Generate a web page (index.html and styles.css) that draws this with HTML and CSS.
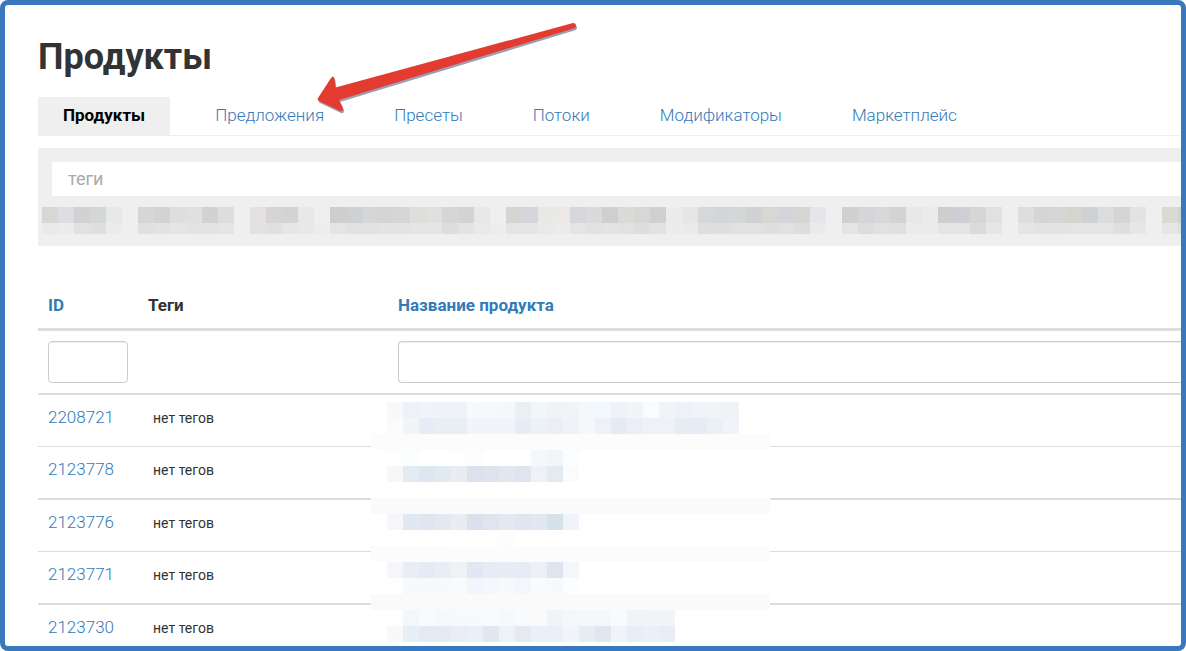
FILE: index.html
```
<!DOCTYPE html>
<html lang="ru">
<head>
    <meta charset="UTF-8">
    <meta name="viewport" content="width=device-width, initial-scale=1.0">
    <title>Продукты</title>
    <link rel="stylesheet" href="styles.css">
</head>

<body>
    <div class="page">
        <h1>Продукты</h1>

        <nav class="tabs">
            <a href="#" class="tab active">Продукты</a>
            <a href="#" class="tab">Предложения</a>
            <a href="#" class="tab">Пресеты</a>
            <a href="#" class="tab">Потоки</a>
            <a href="#" class="tab">Модификаторы</a>
            <a href="#" class="tab">Маркетплейс</a>
        </nav>

        <div class="filter">
            <input type="text" class="tags-input" placeholder="теги" aria-label="теги">
            <svg id="tag-list" class="tag-list" width="1152" height="27"></svg>
        </div>

        <div class="table-wrap">
            <table class="table">
                <thead>
                    <tr>
                        <th class="col-id"><a href="#">ID</a></th>
                        <th class="col-tags">Теги</th>
                        <th><a href="#">Название продукта</a></th>
                    </tr>
                    <tr class="search-row">
                        <td><input type="text" class="form-control" aria-label="ID"></td>
                        <td></td>
                        <td class="name-cell"><input type="text" class="form-control name-input" aria-label="Название продукта"></td>
                    </tr>
                </thead>
                <tbody>
                    <tr><td><a href="#">2208721</a></td><td class="tags">нет тегов</td><td></td></tr>
                    <tr><td><a href="#">2123778</a></td><td class="tags">нет тегов</td><td></td></tr>
                    <tr><td><a href="#">2123776</a></td><td class="tags">нет тегов</td><td></td></tr>
                    <tr><td><a href="#">2123771</a></td><td class="tags">нет тегов</td><td></td></tr>
                    <tr><td><a href="#">2123730</a></td><td class="tags">нет тегов</td><td></td></tr>
                </tbody>
            </table>
            <svg id="names" class="names" width="399" height="240"></svg>
        </div>

        <!-- pointer to the second tab -->
        <svg class="arrow" width="270" height="100" viewBox="0 0 270 100">
            <path class="arrow-shadow" d="M3 79 L16 59 Q19 56 19.500 60 L20.500 68.500 L258 4 Q261 4 261 7 L260 9 L24 81 L28 89 Q28 93 25 92 L4 82 Q2 81 3 79Z"/>
            <path class="arrow-body" d="M3 79 L16 59 Q19 56 19.500 60 L20.500 68.500 L258 4 Q261 4 261 7 L260 9 L24 81 L28 89 Q28 93 25 92 L4 82 Q2 81 3 79Z"/>
        </svg>
    </div>

    <script src="script.js"></script>
</body>
</html>
```
FILE: styles.css
```
* {
    box-sizing: border-box;
}

body {
    margin: 0;
    font-family: Roboto, "Open Sans", sans-serif;
    font-size: 17px;
    font-weight: 300;
    line-height: 24px;
    color: #333;
    background-color: #fff;
}

a {
    color: #337ab7;
    text-decoration: none;
}

.page {
    position: relative;
    height: 100vh;
    padding: 32px 0 0 33px;
    border: 5px solid #3879bd;
    border-radius: 8px;
    overflow: hidden;
}

h1 {
    margin: 0 0 20px;
    font-size: 36px;
    font-weight: 700;
    line-height: 40px;
}

.tabs {
    display: flex;
    gap: 20px;
    border-bottom: 1px solid #eee;
}

.tab {
    padding: 6px 25px 8px;
}

.tab.active {
    background-color: #efefef;
    color: #000;
    font-weight: 700;
}

.filter {
    margin-top: 12px;
    padding: 14px 0 12px;
    background-color: #efefef;
    overflow: hidden;
}

.tags-input {
    display: block;
    width: 100%;
    height: 34px;
    margin: 0 0 11px 14px;
    padding: 0 16px 2px;
    border: 0;
    background-color: #fff;
    font-family: Roboto, sans-serif;
    font-size: 18px;
}

.tags-input::placeholder {
    color: #aaa;
}

.tag-list {
    display: block;
    margin-left: 4px;
}

.table-wrap {
    position: relative;
    margin-top: 42px;
}

.table {
    width: 100%;
    table-layout: fixed;
    border-collapse: separate;
    border-spacing: 0;
}

.col-id {
    width: 100px;
}

.col-tags {
    width: 250px;
}

th {
    padding: 5px 10px 11px;
    border-bottom: 3px solid #ddd;
    font-weight: 700;
    text-align: left;
}

td {
    height: 52px;
    padding: 0 10px 8px;
    border-top: 1px solid #ddd;
}

tbody tr:nth-child(odd) td {
    height: 53px;
    border-top-width: 2px;
}

.search-row td {
    height: 62px;
    padding: 0 10px;
    border-top: 0;
}

.search-row .name-cell {
    padding-right: 0;
}

.form-control {
    display: block;
    width: 100%;
    height: 42px;
    padding: 6px 12px;
    border: 1px solid #ccc;
    border-radius: 4px;
    background-color: #fff;
    box-shadow: inset 0 1px 1px rgba(0, 0, 0, 0.075);
    font-size: 17px;
}

.name-input {
    border-right: 0;
    border-radius: 4px 0 0 4px;
}

tbody .tags {
    padding: 0 10px 6px 15px;
    font-size: 14px;
    font-weight: 400;
}

/* blurred product names lie over the rows */
.names {
    position: absolute;
    left: 333px;
    top: 114px;
}

.arrow {
    position: absolute;
    left: 310px;
    top: 14px;
}

.arrow-body {
    fill: #e43b30;
}

.arrow-shadow {
    fill: #9a9fb5;
    transform: translate(1px, 2px);
}
```
FILE: script.js
```
const CELL = 16;

// Draws one row of square cells, "-" leaves a cell empty
function drawRow(svg, x, y, height, colors) {
    colors.split(" ").forEach((color, i) => {
        if (color !== "-") {
            addRect(svg, x + i * CELL, y, CELL, height, "#" + color);
        }
    });
}

function addRect(svg, x, y, width, height, fill) {
    const rect = document.createElementNS("http://www.w3.org/2000/svg", "rect");
    rect.setAttribute("x", x);
    rect.setAttribute("y", y);
    rect.setAttribute("width", width);
    rect.setAttribute("height", height);
    rect.setAttribute("fill", fill);
    rect.setAttribute("shape-rendering", "crispEdges");
    svg.appendChild(rect);
}

// Tags
const tagList = document.getElementById("tag-list");
drawRow(tagList, 0, 0, 16, "d9d7d4 dddee1 d2d2d2 d5d7d6 e7e9e8 - d6d6d6 d2d4d3 dededc e0e0e2 d2d2d2 dddddb - e3e2e0 d7d4d8 d3d3d3 e8e8e8 - d0cdce cfd0d3 d5d7d6 d5d5d5 d5d7d6 dededc e0e0de d6d6d6 d3d3d3 e6e9e8 - d5d5d3 d5d5db e8e8e6 ece8e5 d6d7da dadada cfcfcf dbdad7 d7d7d7 d2cfd1 ebedec e6e6e6 d5d7da d3d5d9 d5d7d6 cfd1d4 d8d7d4 d5d5d9 d6d7d4 e5e6e9 - d0d0d0 d5d6d9 d8d8d8 d3d3d3 e8e8e8 ebebe9 cecece cfced5 d6d6d6 e1e1e1 - dfdedd d5d5d5 d5d7d6 d4d5cf cfd1d5 dbdcde d4d4d4 e3e3e3 - d9dad4 d3d4d1");
drawRow(tagList, 0, 16, 11, "e9e9e7 eaecec e1e1df dee0df ebebeb - e0e0e0 e1e3e2 e5e5e5 e3e3e3 e3e3e3 e5e5e5 - e3e2e0 dfe0e3 e6e6e6 e8e8e8 ededed e4e4e4 e1e1e1 e1e1e1 e3e3e3 e3e3e3 e5e5e3 e5e5e3 dddddd e3e3e1 e9e9e9 ededed e4e4e4 e4e4e4 e9e9e9 ebebe9 e4e4e4 e1e1e1 e3e3e3 e1e1e1 dfdce0 e2e2e2 ebedec eaeaea dcdfde dee0df e1e1e1 e1e1e1 dfdfdf e1e1e1 dcdedd e9eaec - e4e4e4 dcdcda e1e1e1 dfe0e2 ebebeb ebebe9 e4e4e4 e3e5e4 dbdbd9 e5e7e6 - e5e5e5 e3e3e3 e3e3e3 e4e4e2 e4e6e5 e3e5e4 dfdfdf e7e7e7 - e6e6e4 dededc");

// Product names
const names = document.getElementById("names");
[[32, "fcfcfc"], [96, "fafafa"], [144, "fcfcfc"], [192, "fafafa"]].forEach(band => {
    addRect(names, 0, band[0], 399, 16, "#" + band[1]);
});
drawRow(names, 16, 0, 16, "f8f9fb eef1f7 f0f4f9 eff2f7 eff2f7 f7f9fa f6f8f9 f3f8fb e9eff3 f1f6f9 eff3f8 f0f4f7 f3f8fc f3f8fc eff3f8 f1f5f8 f9fbfc f0f4f9 eef1f6 f0f4f8 f0f4f7 eff3f8");
drawRow(names, 16, 16, 16, "fbfbfd f1f5f8 e4ecf5 e9eef2 e9edf5 f1f5fa f1f5fa f1f5fa e5edf6 edf0f5 eceef6 eff3f9 f5f7fb eef2f6 e4ebf5 ebeef7 eef2f7 eef1f6 e7ebf3 e4ecf5 eceff4 f0f4f9");
drawRow(names, 16, 48, 16, "fdfefe fbfdff - - fefefe fbfdff - - - f4f8fb f1f6f8 fcfdff");
drawRow(names, 16, 64, 16, "f5f7f9 e2eaf3 dee6ef e1e9f1 e9edf1 dae2ed dde4ee e1e8f0 dde5ef eef2f7 e2eaf2 f9fbfd");
drawRow(names, 16, 112, 16, "f4f6fa e0e8f2 dfe6f0 e1e9f1 e9ecf1 dae1ee dfe5ef e2e9f1 dfe6f0 e1e8f1 d7e1eb f0f4fa");
drawRow(names, 16, 128, 16, "- - - - fefefe fefefe fefefe fdfdfd");
drawRow(names, 16, 160, 16, "f4f6fa e8edf6 e4ebf4 e8edf6 eef2f5 e1e8f3 e4ecf4 e7ecf5 e5ecf5 edf0f5 dde5ee f3f7fa");
drawRow(names, 16, 176, 16, "fefefe f8f9fc f8f9fc f8f9fc f8fafc f2f5fb f5f7fb f8f9fb f3f7fb f9fafc f8f9fb fcfdff");
drawRow(names, 16, 208, 16, "fefefe f3f7fa f8fafc f7f8fb f8f9fb f6fafd f9fafc f5f9fc f9fafb fafafa f0f4f9 f4f6fa f5f7fb f4f8fb f9fafc f0f3f8 f0f5f8 f1f5f9");
drawRow(names, 16, 224, 16, "f8f9fb e8eef6 e3eaf3 e4ebf3 eaedf5 ebeff7 e0e8ef eef1f6 e5e9f1 ebeff7 ebeff7 f2f4f8 e6edf5 e0e7ee f0f3f9 e9edf6 ebeff8 e8edf6");
```
